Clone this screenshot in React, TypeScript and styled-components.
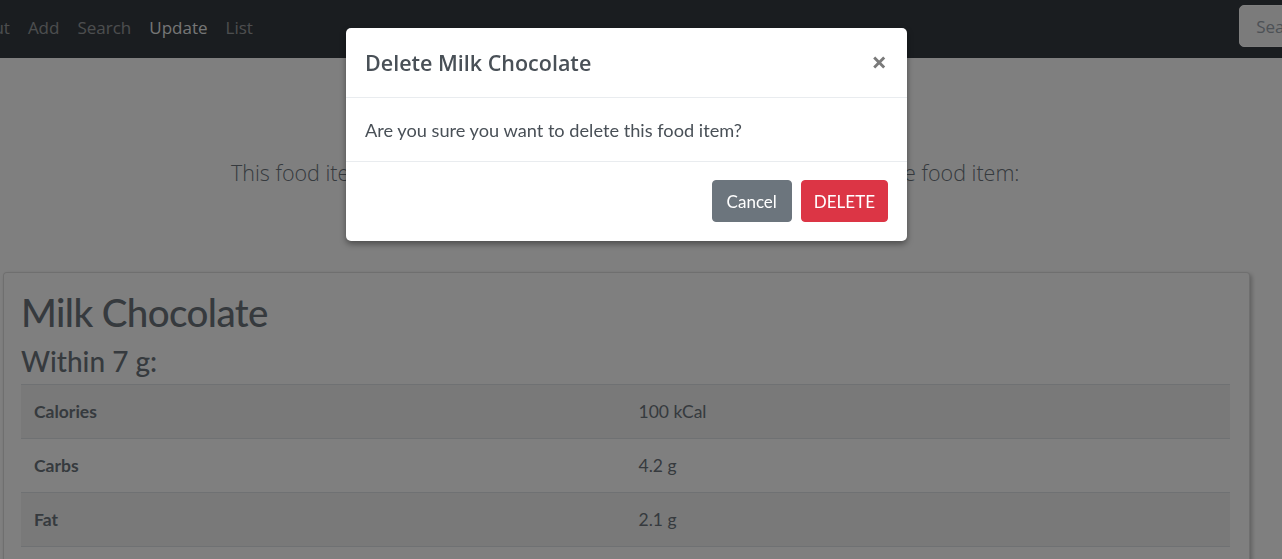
import React from "react";
import styled, { createGlobalStyle } from "styled-components";

const GlobalStyle = createGlobalStyle`
  html, body {
    margin: 0;
    padding: 0;
    overflow: hidden;
    background: #ffffff;
  }
  body {
    font-family: Lato, "Open Sans", sans-serif;
    font-size: 16px;
    color: #6c757d;
  }
  * { box-sizing: border-box; }
`;

const Navbar = styled.nav`
  display: flex;
  align-items: flex-start;
  justify-content: space-between;
  height: 58px;
  background: #343a40;
  overflow: hidden;
`;

const NavLinks = styled.div`
  display: flex;
  align-items: center;
  height: 54px;
  margin-left: -47px;
`;

const NavLink = styled.a<{ $active?: boolean }>`
  padding: 8px 9px;
  font-family: "Open Sans", sans-serif;
  font-size: 17px;
  color: ${(p) => (p.$active ? "rgba(255,255,255,0.92)" : "rgba(255,255,255,0.5)")};
  text-decoration: none;
  white-space: nowrap;
`;

const SearchButton = styled.button`
  height: 42px;
  margin-top: 5px;
  margin-right: -45px;
  padding: 0 16px;
  font-family: "Open Sans", sans-serif;
  font-size: 17px;
  background: #f6f6f6;
  color: #9aa3ac;
  border: 1px solid #ffffff;
  border-radius: 5px;
`;

const Main = styled.main`
  display: flex;
  flex-direction: column;
  padding: 0 32px 0 3px;
`;

const Lead = styled.p`
  margin: 99px 0 0 0;
  padding-left: 228px;
  font-family: "Open Sans", sans-serif;
  font-size: 21.5px;
  font-weight: 300;
  line-height: 32px;
  color: #6c757d;
  white-space: nowrap;
`;

const Card = styled.section`
  margin-top: 83px;
  width: 1247px;
  border: 1px solid rgba(0, 0, 0, 0.125);
  border-radius: 4px;
  box-shadow: 2px 2px 4px rgba(0, 0, 0, 0.25);
  padding: 15px 19px 20px 17px;
  background: #ffffff;
`;

const FoodTitle = styled.h1`
  margin: 0 0 8px 0;
  font-size: 38.5px;
  font-weight: 500;
  letter-spacing: -0.6px;
  line-height: 48px;
  color: #6c757d;
`;

const Subtitle = styled.h3`
  margin: 0 0 6px 0;
  font-size: 28px;
  font-weight: 500;
  line-height: 34px;
  color: #6c757d;
`;

const Table = styled.table`
  width: 100%;
  border-collapse: collapse;
`;

const Row = styled.tr<{ $striped?: boolean }>`
  background: ${(p) => (p.$striped ? "rgba(0,0,0,0.05)" : "transparent")};
`;

const Cell = styled.td<{ $bold?: boolean }>`
  width: 50%;
  height: 54px;
  padding: 0 13px;
  border-top: 1px solid #dee2e6;
  border-bottom: 1px solid #dee2e6;
  font-size: 17.5px;
  font-weight: ${(p) => (p.$bold ? 700 : 400)};
  color: #6c757d;
  vertical-align: middle;
`;

const Backdrop = styled.div`
  position: fixed;
  inset: 0;
  background: rgba(0, 0, 0, 0.5);
`;

const ModalLayer = styled.div`
  position: fixed;
  inset: 0;
  padding: 28px 0 0 346px;
`;

const Dialog = styled.div`
  width: 561px;
  background: #ffffff;
  border-radius: 5px;
  box-shadow: 0 3px 6px rgba(0, 0, 0, 0.4);
  display: flex;
  flex-direction: column;
`;

const ModalHeader = styled.div`
  display: flex;
  align-items: center;
  justify-content: space-between;
  height: 70px;
  padding: 0 20px 0 19px;
  border-bottom: 1px solid #e9ecef;
`;

const ModalTitle = styled.h5`
  margin: 0;
  font-family: "Open Sans", sans-serif;
  font-size: 21.5px;
  font-weight: 600;
  color: #495057;
`;

const CloseButton = styled.button`
  border: none;
  background: none;
  padding: 0 0 3px 0;
  font-family: "Open Sans", sans-serif;
  font-size: 27px;
  font-weight: 700;
  line-height: 1;
  color: #7a7a7a;
`;

const ModalBody = styled.div`
  height: 64px;
  display: flex;
  align-items: center;
  padding: 0 19px;
  font-size: 18.2px;
  color: #495057;
  border-bottom: 1px solid #e9ecef;
`;

const ModalFooter = styled.div`
  display: flex;
  justify-content: flex-end;
  gap: 9px;
  padding: 18px 19px 19px;
`;

const ActionButton = styled.button<{ $variant: "secondary" | "danger" }>`
  height: 42px;
  padding: 0 ${(p) => (p.$variant === "danger" ? "12px" : "14px")};
  font-family: inherit;
  font-size: 17px;
  color: #ffffff;
  border: 1px solid ${(p) => (p.$variant === "danger" ? "#dc3545" : "#6c757d")};
  background: ${(p) => (p.$variant === "danger" ? "#dc3545" : "#6c757d")};
  border-radius: 4px;
`;

const rows = [
  { label: "Calories", value: "100 kCal" },
  { label: "Carbs", value: "4.2 g" },
  { label: "Fat", value: "2.1 g" },
];

export default function App() {
  return (
    <>
      <GlobalStyle />
      <Navbar>
        <NavLinks>
          <NavLink href="#">About</NavLink>
          <NavLink href="#">Add</NavLink>
          <NavLink href="#">Search</NavLink>
          <NavLink href="#" $active>Update</NavLink>
          <NavLink href="#">List</NavLink>
        </NavLinks>
        <SearchButton>Search</SearchButton>
      </Navbar>
      <Main>
        <Lead>
          This food item will be permanently deleted from the record. Here is the food item:
        </Lead>
        <Card>
          <FoodTitle>Milk Chocolate</FoodTitle>
          <Subtitle>Within 7 g:</Subtitle>
          <Table>
            <tbody>
              {rows.map((r, i) => (
                <Row key={r.label} $striped={i % 2 === 0}>
                  <Cell $bold>{r.label}</Cell>
                  <Cell>{r.value}</Cell>
                </Row>
              ))}
            </tbody>
          </Table>
        </Card>
      </Main>
      <Backdrop />
      <ModalLayer>
        <Dialog>
          <ModalHeader>
            <ModalTitle>Delete Milk Chocolate</ModalTitle>
            <CloseButton aria-label="Close">×</CloseButton>
          </ModalHeader>
          <ModalBody>Are you sure you want to delete this food item?</ModalBody>
          <ModalFooter>
            <ActionButton $variant="secondary">Cancel</ActionButton>
            <ActionButton $variant="danger">DELETE</ActionButton>
          </ModalFooter>
        </Dialog>
      </ModalLayer>
    </>
  );
}
